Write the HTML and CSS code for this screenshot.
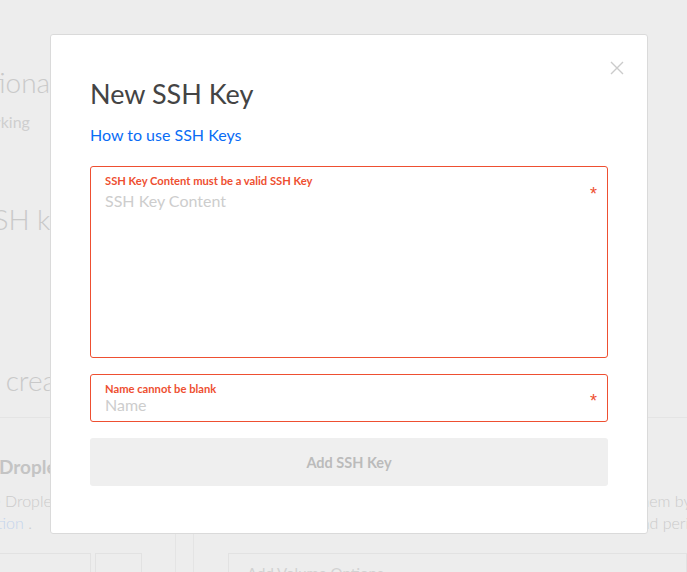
FILE: index.html
```html
<!DOCTYPE html>
<html lang="en">
<head>
<meta charset="utf-8">
<title>New SSH Key</title>
<link rel="stylesheet" href="styles.css">
</head>
<body>
<div class="page">
  <h2 class="bg-title t-options">Select additional options</h2>
  <p class="bg-sub">Private networking</p>
  <h2 class="bg-title t-ssh">Add your SSH keys</h2>
  <h2 class="bg-title t-final">Finalize and create</h2>
  <div class="bg-divider"></div>
  <div class="bg-cols">
    <div class="bg-col-left">
      <h3 class="bg-heading">Droplets</h3>
      <p class="bg-text l1">Deploy multiple Droplets with the same</p>
      <p class="bg-text l2"><span class="bg-link">configuration</span> .</p>
    </div>
    <div class="bg-col-right">
      <p class="bg-text">them by</p>
      <p class="bg-text r2">and period</p>
    </div>
  </div>
  <div class="bg-row">
    <div class="bg-box b1"></div>
    <div class="bg-box b2"></div>
    <div class="bg-rail"></div>
    <div class="bg-box b3"><span class="bg-box-text">Add Volume Options</span></div>
  </div>
</div>

<div class="overlay">
  <div class="modal">
    <button class="close" type="button" aria-label="Close">
      <svg width="14" height="14" viewBox="0 0 14 14"><path d="M1 1 L13 13 M13 1 L1 13" stroke="#cbcbcb" stroke-width="1.4" fill="none"/></svg>
    </button>
    <h1 class="modal-title">New SSH Key</h1>
    <a class="help-link" href="#">How to use SSH Keys</a>
    <form class="form">
      <div class="field field-area">
        <div class="field-body">
          <label class="field-error">SSH Key Content must be a valid SSH Key</label>
          <textarea class="field-input area" placeholder="SSH Key Content"></textarea>
        </div>
        <span class="req">*</span>
      </div>
      <div class="field field-line">
        <div class="field-body">
          <label class="field-error">Name cannot be blank</label>
          <input class="field-input line" type="text" placeholder="Name">
        </div>
        <span class="req req-line">*</span>
      </div>
      <button class="submit" type="button" disabled>Add SSH Key</button>
    </form>
  </div>
</div>
</body>
</html>
```
FILE: styles.css
```css
* { box-sizing: border-box; }
html, body {
  margin: 0;
  padding: 0;
  height: 100%;
  overflow: hidden;
}
body {
  background: #ededed;
  font-family: Lato, "Open Sans", sans-serif;
  color: #444;
}

/* ---------- background page ---------- */
.page {
  padding-top: 65px;
  white-space: nowrap;
  height: 572px;
  overflow: hidden;
}
.bg-title {
  margin: 0;
  font-size: 28px;
  line-height: 34px;
  font-weight: 300;
  color: #c9c9c9;
}
.t-options { margin-left: -142px; }
.t-ssh { margin-top: 70px; margin-left: -139px; }
.t-final { margin-top: 127px; margin-left: -144px; }
.bg-sub {
  margin: 13px 0 0 -103px;
  font-size: 16px;
  line-height: 20px;
  color: #cfcfcf;
}
.bg-divider {
  margin-top: 20px;
  height: 1px;
  background: #e4e4e4;
}
.bg-cols {
  display: flex;
  margin-top: 37px;
}
.bg-col-left {
  flex-shrink: 0;
  margin-left: -1px;
  width: 600px;
}
.bg-col-right {
  flex-shrink: 0;
  margin-left: 36px;
  padding-top: 35px;
}
.bg-heading {
  margin: 0;
  font-size: 19px;
  line-height: 24px;
  font-weight: 700;
  color: #c4c4c4;
}
.bg-text {
  margin: 0;
  font-size: 16px;
  line-height: 22px;
  font-weight: 300;
  color: #cbcbcb;
}
.l1 { margin: 11px 0 0 -107px; }
.l2 { margin-left: -66px; }
.r2 { margin-left: -2px; }
.bg-link { color: #c4d4ec; }
.bg-row {
  display: flex;
  margin-top: 19px;
  height: 19px;
}
.bg-box {
  border-top: 1px solid #e2e2e2;
  border-right: 1px solid #e2e2e2;
}
.b1 { width: 91px; }
.b2 { width: 47px; margin-left: 4px; border-left: 1px solid #e2e2e2; }
.bg-rail {
  width: 19px;
  margin-left: 33px;
  margin-top: -30px;
  border-left: 1px solid #e4e4e4;
  border-right: 1px solid #e4e4e4;
}
.b3 {
  flex: 1;
  margin-left: 34px;
  border-left: 1px solid #e2e2e2;
  padding: 9px 0 0 18px;
}
.bg-box-text {
  font-size: 15px;
  color: #d2d2d2;
}

/* ---------- modal ---------- */
.overlay {
  position: fixed;
  inset: 0;
  padding: 34px 0 0 50px;
}
.modal {
  position: relative;
  width: 598px;
  height: 500px;
  background: #fff;
  border: 1px solid #dadada;
  border-radius: 3px;
  padding: 0 39px;
}
.close {
  position: absolute;
  top: 26px;
  right: 23px;
  width: 14px;
  height: 14px;
  padding: 0;
  border: 0;
  background: none;
  display: block;
}
.close svg { display: block; }
.modal-title {
  margin: 42px 0 0;
  font-size: 27px;
  line-height: 34px;
  font-weight: 400;
  color: #444;
}
.help-link {
  display: block;
  margin-top: 14px;
  font-size: 16px;
  line-height: 20px;
  color: #0a6cf5;
  text-decoration: none;
}
.form {
  display: flex;
  flex-direction: column;
  margin-top: 21px;
}
.field {
  display: flex;
  align-items: flex-start;
  border: 1px solid #ee4f31;
  border-radius: 3px;
  padding: 7px 10px 0 14px;
}
.field-area { height: 192px; }
.field-line { height: 48px; margin-top: 16px; }
.field-body {
  flex: 1;
  display: flex;
  flex-direction: column;
  min-width: 0;
}
.field-error {
  font-size: 11.2px;
  line-height: 14px;
  font-weight: 700;
  color: #ee4f31;
}
.field-input {
  border: 0;
  outline: none;
  padding: 0;
  margin: 0;
  font-family: Lato, "Open Sans", sans-serif;
  font-size: 16px;
  line-height: 20px;
  color: #444;
  background: transparent;
  resize: none;
}
.field-input::placeholder { color: #cdcdcd; }
.area { margin-top: 3px; height: 150px; }
.line { height: 20px; margin-top: -1px; }
.req {
  margin-top: 10px;
  font-family: "Liberation Sans", Arial, sans-serif;
  font-size: 18px;
  line-height: 20px;
  color: #ee4f31;
}
.req-line { margin-top: 9px; }
.submit {
  margin-top: 16px;
  height: 48px;
  border: 0;
  border-radius: 3px;
  background: #efefef;
  font-family: Lato, "Open Sans", sans-serif;
  font-size: 14.5px;
  font-weight: 700;
  color: #bbbbbb;
}
```
